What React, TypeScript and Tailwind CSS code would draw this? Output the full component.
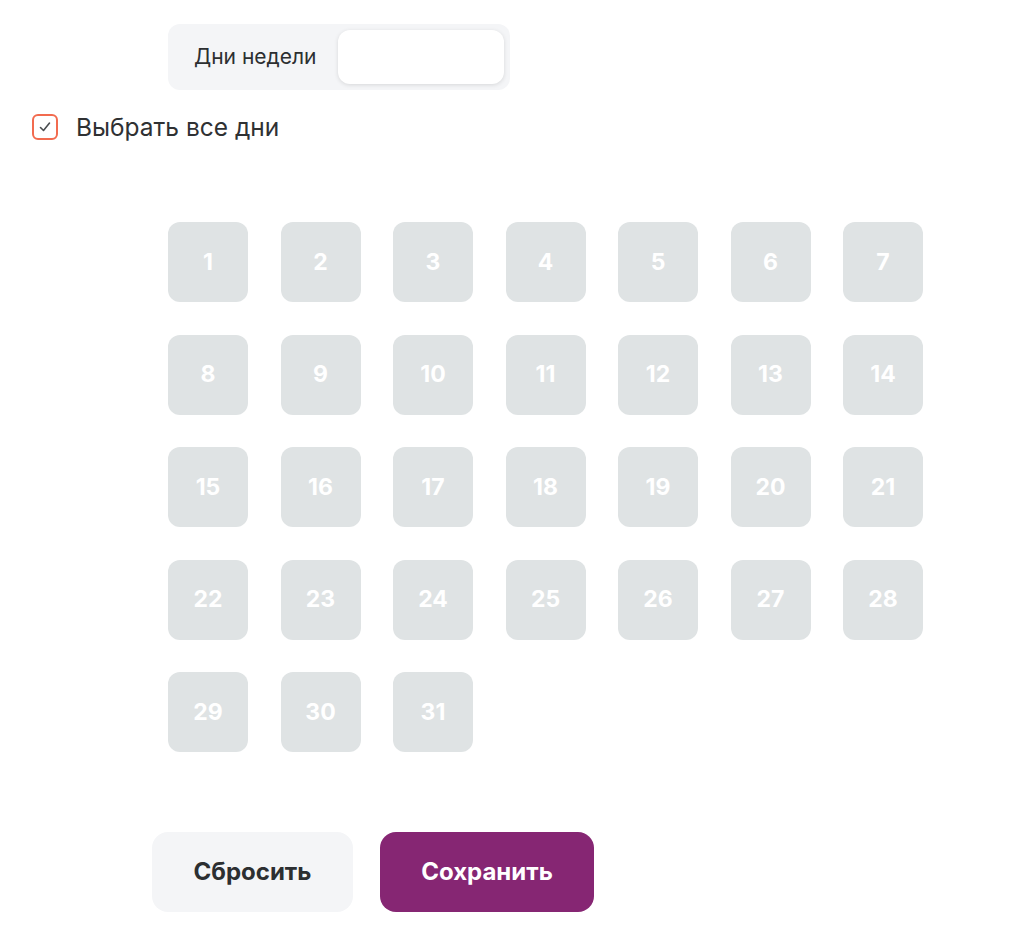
import { useState } from 'react'

/**
 * Выбор дней месяца
 */
export default function App() {
  const [allDays, setAllDays] = useState(true)
  const days = Array.from({ length: 31 }, (_, i) => i + 1)

  return (
    <div className="min-h-screen bg-white font-['Inter',sans-serif] text-[#2f3133]">
      {/* Tabs */}
      <div className="pl-[168px] pt-[24px]">
        <div className="inline-flex h-[66px] w-[342px] items-center rounded-[12px] bg-[#f4f5f7] pl-[26px] pr-[6px]">
          <span className="text-[21px] leading-[28px] text-[#2c2f31]">Дни недели</span>
          <div className="ml-auto h-[54px] w-[166px] rounded-[12px] bg-white shadow-[0_1px_4px_rgba(0,0,0,0.12)]"></div>
        </div>
      </div>

      {/* Select all */}
      <label className="mt-[21px] ml-[32px] flex h-[32px] w-fit cursor-pointer items-center gap-[18px]">
        <span
          onClick={() => setAllDays(!allDays)}
          className="flex h-[26px] w-[26px] items-center justify-center rounded-[6px] border-2 border-[#f26b4f] bg-white"
        >
          {allDays && (
            <svg width="14" height="14" viewBox="0 0 14 14" fill="none">
              <path d="M2.5 7.5 L5.5 10.5 L11.5 3" stroke="#4a4d50" strokeWidth="1.6" strokeLinecap="round" strokeLinejoin="round" />
            </svg>
          )}
        </span>
        <span className="text-[24.5px] leading-[32px] text-[#2f3133]">Выбрать все дни</span>
      </label>

      {/* Days grid */}
      <div className="mt-[79px] ml-[168px] grid w-fit grid-cols-7 gap-[32.5px]">
        {days.map((d) => (
          <div
            key={d}
            className="flex h-[80px] w-[80px] items-center justify-center rounded-[12px] bg-[#dfe3e4] text-[23px] font-bold text-white"
          >
            {d}
          </div>
        ))}
      </div>

      {/* Actions */}
      <div className="mt-[80px] ml-[152px] flex gap-[27px]">
        <button className="h-[80px] w-[201px] rounded-[16px] bg-[#f4f5f7] text-[24px] font-bold text-[#2c2f31]">
          Сбросить
        </button>
        <button className="h-[80px] w-[214px] rounded-[16px] bg-[#862673] text-[24px] font-bold text-white">
          Сохранить
        </button>
      </div>
    </div>
  )
}
